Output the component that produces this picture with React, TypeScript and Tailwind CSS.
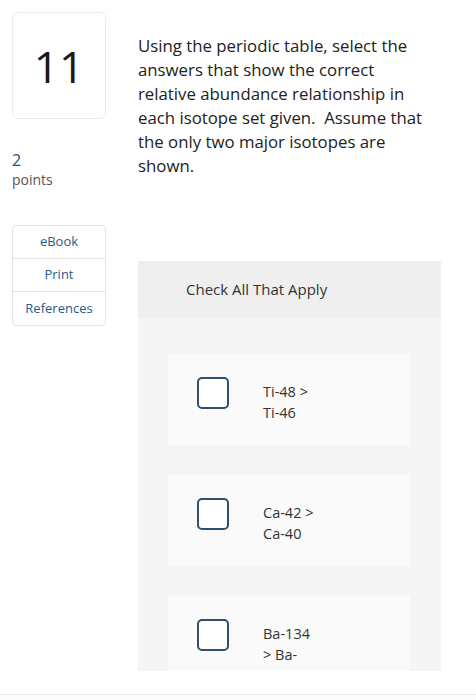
export default function App() {
  const options = [
    ["Ti-48 >", "Ti-46"],
    ["Ca-42 >", "Ca-40"],
    ["Ba-134", "> Ba-", "136"],
  ];

  const question = [
    "Using the periodic table, select the",
    "answers that show the correct",
    "relative abundance relationship in",
    "each isotope set given.\u00a0 Assume that",
    "the only two major isotopes are",
    "shown.",
  ];

  return (
    <div className="w-[476px] h-[700px] bg-white text-[#222] font-['Open_Sans','Lato',sans-serif] overflow-hidden">
      <div className="flex h-[671px]">
        {/* LEFT */}
        <div className="w-[138px] shrink-0 pl-3 pt-3">
          <div className="w-[94px] h-[107px] border border-[#ececec] rounded-md flex items-center justify-center text-[44px] text-[#1a1a1a]">
            11
          </div>
          <div className="mt-[31px] text-[16px] leading-[20px] text-[#1f4e79]">2</div>
          <div className="text-[14px] leading-[20px] text-[#555]">points</div>

          <div className="mt-[35px] w-[94px] border border-[#e3e3e3] rounded text-[13px] text-[#2a5a8a] text-center">
            <div className="h-[33px] flex items-center justify-center border-b border-[#e3e3e3]">eBook</div>
            <div className="h-[33px] flex items-center justify-center border-b border-[#e3e3e3]">Print</div>
            <div className="h-[33px] flex items-center justify-center">References</div>
          </div>
        </div>

        {/* RIGHT */}
        <div className="w-[303px] flex flex-col">
          <p className="mt-[34px] text-[16.8px] leading-[24px] text-[#222] whitespace-nowrap">
            {question.map((l) => (
              <span key={l} className="block">{l}</span>
            ))}
          </p>

          <div className="mt-[83px] flex-1 bg-[#f5f5f5] overflow-hidden">
            <div className="h-[57px] bg-[#efefef] flex items-center pl-12 text-[15px] text-[#333]">
              Check All That Apply
            </div>
            <div className="pt-[36px] pl-[30px] pr-[31px] flex flex-col gap-[30px]">
              {options.map((lines, i) => (
                <div key={i} className="min-h-[91px] shrink-0 bg-[#fafafa] flex items-start pt-[23px] pb-[20px] pl-[29px]">
                  <div className="w-[32px] h-[32px] border-2 border-[#2f4f6f] rounded-[5px] bg-white shrink-0" />
                  <div className="ml-[34px] mt-[4px] text-[14.5px] leading-[21px] text-[#333]">
                    {lines.map((l) => (
                      <div key={l}>{l}</div>
                    ))}
                  </div>
                </div>
              ))}
            </div>
          </div>
        </div>
      </div>
      <div className="mt-[23px] border-t border-[#e6e6e6] h-[6px] bg-[#fcfcfc]" />
    </div>
  );
}
